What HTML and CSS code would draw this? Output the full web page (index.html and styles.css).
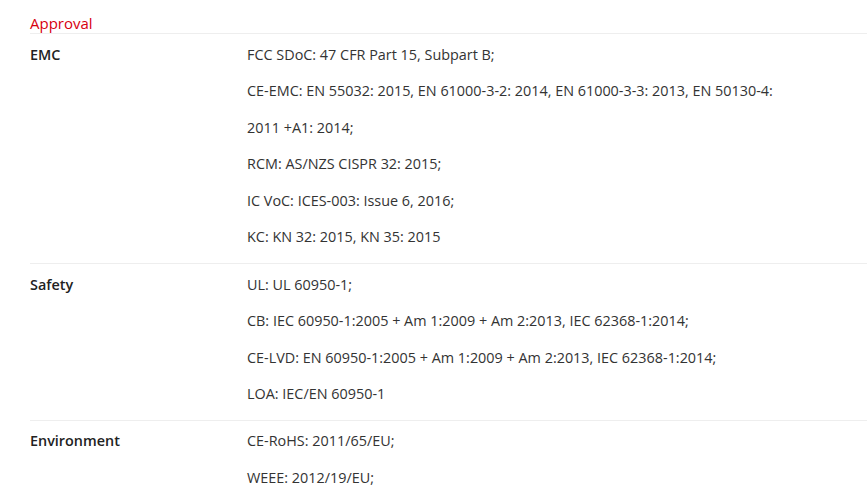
FILE: index.html
```
<!DOCTYPE html>
<html>
<head>
<meta charset="utf-8">
<link rel="stylesheet" href="styles.css">
</head>
<body>
<div class="spec">
  <h3 class="spec-title">Approval</h3>
  <div class="spec-row">
    <div class="spec-label">EMC</div>
    <div class="spec-value">
      <p>FCC SDoC: 47 CFR Part 15, Subpart B;</p>
      <p>CE-EMC: EN 55032: 2015, EN 61000-3-2: 2014, EN 61000-3-3: 2013, EN 50130-4:</p>
      <p>2011 +A1: 2014;</p>
      <p>RCM: AS/NZS CISPR 32: 2015;</p>
      <p>IC VoC: ICES-003: Issue 6, 2016;</p>
      <p>KC: KN 32: 2015, KN 35: 2015</p>
    </div>
  </div>
  <div class="spec-row">
    <div class="spec-label">Safety</div>
    <div class="spec-value">
      <p>UL: UL 60950-1;</p>
      <p>CB: IEC 60950-1:2005 + Am 1:2009 + Am 2:2013, IEC 62368-1:2014;</p>
      <p>CE-LVD: EN 60950-1:2005 + Am 1:2009 + Am 2:2013, IEC 62368-1:2014;</p>
      <p>LOA: IEC/EN 60950-1</p>
    </div>
  </div>
  <div class="spec-row">
    <div class="spec-label">Environment</div>
    <div class="spec-value">
      <p>CE-RoHS: 2011/65/EU;</p>
      <p>WEEE: 2012/19/EU;</p>
    </div>
  </div>
</div>
</body>
</html>
```
FILE: styles.css
```
html, body {
  margin: 0;
  padding: 0;
  background: #fff;
}
body {
  font-family: "Open Sans", "Liberation Sans", sans-serif;
  font-size: 14.4px;
  color: #333;
}
.spec {
  margin-left: 30px;
}
.spec-title {
  margin: 0;
  padding-top: 13px;
  font-size: 15px;
  line-height: 20px;
  font-weight: 400;
  color: #d7000f;
  border-bottom: 1px solid #eee;
}
.spec-row {
  display: flex;
  padding-top: 9.5px;
  border-bottom: 1px solid #eee;
}
.spec-label {
  width: 217px;
  flex-shrink: 0;
  font-weight: 600;
  line-height: 21.6px;
  color: #222;
}
.spec-value p {
  margin: 0 0 15px;
  line-height: 21.6px;
}
```
